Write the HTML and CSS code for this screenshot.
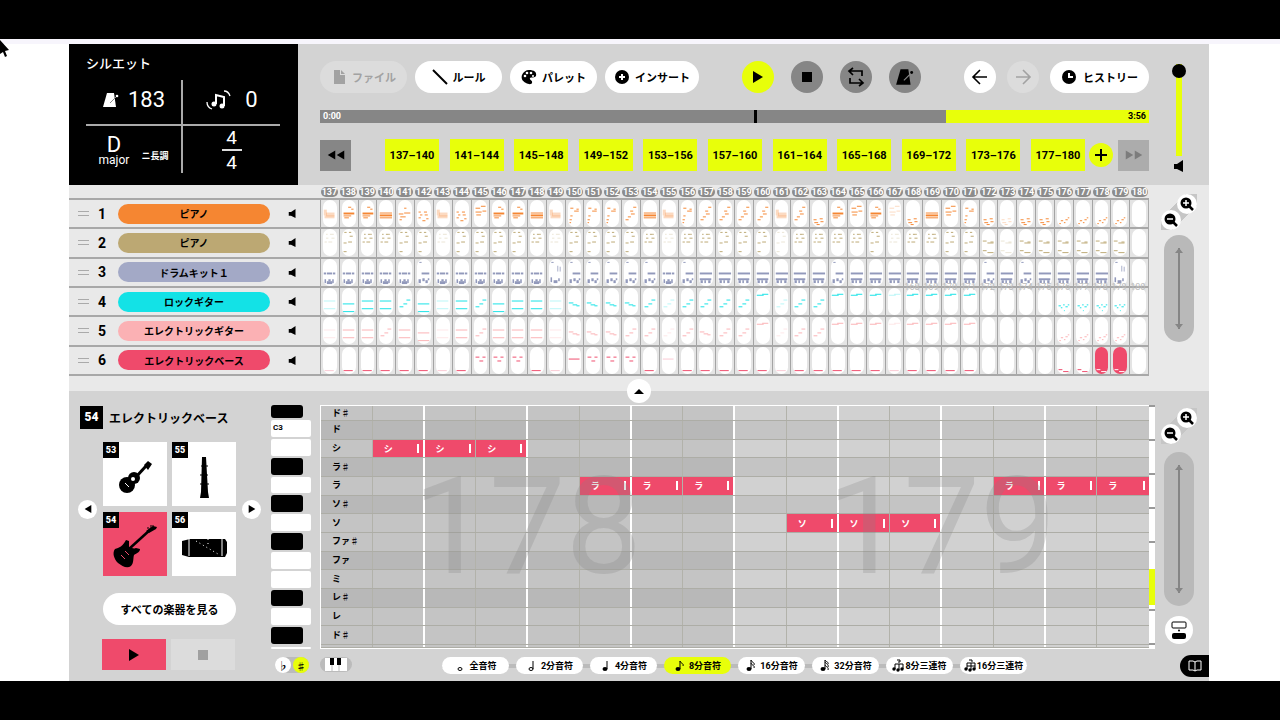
FILE: index.html
```
<!DOCTYPE html>
<html lang="ja">

<head>
    <meta charset="UTF-8">
    <meta name="viewport" content="width=device-width, initial-scale=1.0">
    <title>シルエット</title>
    <link rel="stylesheet" href="styles.css">
</head>

<body>
    <svg class="symbols" aria-hidden="true">
        <symbol id="i-play" viewBox="0 0 12 12"><path d="M1 0v12l10-6z"/></symbol>
        <symbol id="i-left" viewBox="0 0 12 12"><path d="M11 0v12L1 6z"/></symbol>
        <symbol id="i-stop" viewBox="0 0 12 12"><path d="M1 1h10v10H1z"/></symbol>
        <symbol id="i-speaker" viewBox="0 0 12 12"><path d="M1 4h3l6-4v12L4 9H1z"/></symbol>
        <symbol id="i-metronome" viewBox="0 0 18 18"><path d="M5 2h7l2 14H1z"/><path d="M8 12l7-7" class="stick"/><circle cx="15" cy="5" r="1.300"/></symbol>
        <symbol id="i-in" viewBox="0 0 14 14"><circle cx="6" cy="6" r="5.500"/><path d="M9 9l4 4" stroke="#000" stroke-width="2.500"/><path d="M3 6h6M6 3v6" stroke="#fff" stroke-width="1.500"/></symbol>
        <symbol id="i-out" viewBox="0 0 14 14"><circle cx="6" cy="6" r="5.500"/><path d="M9 9l4 4" stroke="#000" stroke-width="2.500"/><path d="M3 6h6" stroke="#fff" stroke-width="1.500"/></symbol>
        <symbol id="n-1" viewBox="0 0 12 14"><ellipse cx="6" cy="10" rx="2" ry="1.500" fill="none" stroke="#000"/></symbol>
        <symbol id="n-2" viewBox="0 0 12 14"><ellipse cx="5" cy="10" rx="2" ry="1.500" fill="none" stroke="#000"/><path d="M7 10V2" stroke="#000"/></symbol>
        <symbol id="n-4" viewBox="0 0 12 14"><ellipse cx="5" cy="10" rx="2.500" ry="2"/><path d="M7 10V2" stroke="#000"/></symbol>
        <symbol id="n-8" viewBox="0 0 12 14"><ellipse cx="4" cy="10" rx="2.500" ry="2"/><path d="M6 10V2c1 3 4 2 3 5" stroke="#000" fill="none"/></symbol>
        <symbol id="n-16" viewBox="0 0 12 14"><ellipse cx="4" cy="10" rx="2.500" ry="2"/><path d="M6 10V1c1 3 4 2 3 5M6 4c1 3 4 2 3 5" stroke="#000" fill="none"/></symbol>
        <symbol id="n-32" viewBox="0 0 12 14"><ellipse cx="4" cy="10" rx="2.500" ry="2"/><path d="M6 10V1c1 2 4 2 3 4M6 3c1 2 4 2 3 5M6 6c1 2 4 2 3 5" stroke="#000" fill="none"/></symbol>
        <symbol id="n-t8" viewBox="0 0 12 14"><circle cx="2" cy="10" r="1.700"/><circle cx="6" cy="11" r="1.700"/><circle cx="10" cy="10" r="1.700"/><path d="M3 10V5h8v5M7 11V5M5 1h3v2H6" stroke="#000" fill="none"/></symbol>
        <symbol id="n-t16" viewBox="0 0 12 14"><circle cx="2" cy="10" r="1.700"/><circle cx="6" cy="11" r="1.700"/><circle cx="10" cy="10" r="1.700"/><path d="M3 10V4h8v6M7 11V4M3 7h8M5 1h3v2" stroke="#000" fill="none"/></symbol>
    </svg>

    <main class="app">
        <header class="header">
            <section class="song">
                <h1>シルエット</h1>
                <div class="song-grid">
                    <div class="tempo"><svg class="icon-18"><use href="#i-metronome"/></svg><span>183</span></div>
                    <div class="transpose">
                        <svg class="icon-26" viewBox="0 0 26 20"><circle cx="9" cy="14" r="2.500"/><circle cx="17" cy="16" r="2.500"/><path d="M11 14V5l8 2v9" fill="none" stroke="#fff" stroke-width="2"/><path d="M2 12c0 4 2 6 5 7M19 1c4 0 5 2 6 5" fill="none" stroke="#fff" stroke-width="1.300"/></svg>
                        <span>0</span>
                    </div>
                    <div class="key"><p><span>D</span><small>major</small></p><em>ニ長調</em></div>
                    <div class="beat"><span>4</span><span>4</span></div>
                </div>
            </section>

            <section class="controls">
                <div class="toolbar">
                    <div class="group">
                        <button class="pill" disabled><svg class="icon-16" viewBox="0 0 16 16"><path d="M3 1h6v5h5v9H3zM10 1l4 4h-4z"/></svg>ファイル</button>
                        <button class="pill"><svg class="icon-16" viewBox="0 0 16 16"><path d="M1 1l14 14" stroke="#000" stroke-width="2"/></svg>ルール</button>
                        <button class="pill"><svg class="icon-16" viewBox="0 0 16 16"><path d="M8 1c5 0 8 2 7 6-1 2-5 1-6 2-1 2 3 2 2 5-1 2-4 1-6 0C1 12 0 9 1 6c1-3 4-5 7-5z"/><g fill="#fff"><circle cx="4" cy="7" r="1.300"/><circle cx="6" cy="4" r="1.300"/><circle cx="10" cy="4" r="1.300"/><circle cx="12" cy="7" r="1"/></g></svg>パレット</button>
                        <button class="pill"><svg class="icon-16" viewBox="0 0 16 16"><circle cx="8" cy="8" r="7"/><path d="M5 8h6M8 5v6" stroke="#fff" stroke-width="2"/></svg>インサート</button>
                    </div>
                    <div class="group transport">
                        <button class="round active" aria-label="再生"><svg class="icon-12"><use href="#i-play"/></svg></button>
                        <button class="round dark" aria-label="停止"><svg class="icon-12"><use href="#i-stop"/></svg></button>
                        <button class="round dark" aria-label="ループ"><svg class="icon-20" viewBox="0 0 20 20"><path d="M7 1L3 4l4 4M3 4h13v5M13 12l4 4-4 3M17 16H4v-5" fill="none" stroke="#000" stroke-width="1.700"/></svg></button>
                        <button class="round dark" aria-label="メトロノーム"><svg class="icon-20 lit"><use href="#i-metronome"/></svg></button>
                    </div>
                    <div class="group history">
                        <button class="round" aria-label="戻る"><svg class="icon-18" viewBox="0 0 18 18"><path d="M9 2L2 9l7 7M2 9h14" fill="none" stroke="#000" stroke-width="1.600"/></svg></button>
                        <button class="round" aria-label="進む" disabled><svg class="icon-18" viewBox="0 0 18 18"><path d="M9 2l7 7-7 7M16 9H2" fill="none" stroke="#a2a2a2" stroke-width="1.600"/></svg></button>
                        <button class="pill wide"><svg class="icon-16" viewBox="0 0 16 16"><circle cx="8" cy="8" r="7"/><path d="M8 4v4h4" fill="none" stroke="#fff" stroke-width="2"/></svg>ヒストリー</button>
                    </div>
                </div>

                <div class="progress">
                    <input type="range" min="0" max="1000" value="525" aria-label="再生位置">
                    <span>0:00</span><span class="total">3:56</span>
                </div>

                <div class="ranges">
                    <button class="skip" aria-label="前へ"><svg class="icon-9"><use href="#i-left"/></svg><svg class="icon-9"><use href="#i-left"/></svg></button>
                    <div class="range-list" id="ranges"></div>
                    <button class="add" aria-label="追加"><svg class="icon-12" viewBox="0 0 12 12"><path d="M0 6h12M6 0v12" stroke="#000" stroke-width="2"/></svg></button>
                    <button class="skip off" aria-label="次へ"><svg class="icon-9"><use href="#i-play"/></svg><svg class="icon-9"><use href="#i-play"/></svg></button>
                </div>
            </section>

            <div class="volume">
                <input type="range" min="0" max="100" value="100" aria-label="音量">
                <svg class="icon-12"><use href="#i-speaker"/></svg>
            </div>
        </header>

        <section class="tracks">
            <div class="timeline">
                <div class="measures" id="measures"></div>
                <div class="track-rows" id="tracks"></div>
            </div>
            <aside class="side">
                <div class="zoom">
                    <button class="zoom-in" aria-label="拡大"><svg class="icon-14"><use href="#i-in"/></svg></button>
                    <button class="zoom-out" aria-label="縮小"><svg class="icon-14"><use href="#i-out"/></svg></button>
                </div>
                <div class="scroller"><i></i></div>
            </aside>
            <button class="collapse" aria-label="閉じる"><svg class="icon-12" viewBox="0 0 12 12"><path d="M1 9l5-5 5 5z"/></svg></button>
        </section>

        <section class="editor">
            <aside class="instrument">
                <h2><b>54</b>エレクトリックベース</h2>
                <div class="carousel">
                    <button class="arrow" aria-label="前の楽器"><svg class="icon-8"><use href="#i-left"/></svg></button>
                    <div class="tiles">
                        <button class="tile"><b>53</b><svg viewBox="0 0 64 64"><circle cx="24" cy="43" r="8"/><circle cx="31" cy="36" r="6"/><path d="M33 35l10-11" stroke="#000" stroke-width="3"/><path d="M41 23l4-4 4 3-4 6z"/><circle cx="30" cy="37" r="2" fill="#fff"/><path d="M22 41l4 4" stroke="#fff"/></svg></button>
                        <button class="tile"><b>55</b><svg viewBox="0 0 64 64"><path d="M30 15h4l2 35 1 6h-9l1-6z"/><path d="M29 24h7M28 33h8M28 42h9" stroke="#000"/></svg></button>
                        <button class="tile selected"><b>54</b><svg viewBox="0 0 64 64"><path d="M12 37c4-1 8-3 11-9l3 1v6c3 1 5 2 7 1l4 1c0 3-3 4-6 6-1 3 0 8-3 11-4 3-9 0-13-3-4-4-6-10-3-14z"/><path d="M26 37l22-20" stroke="#000" stroke-width="2.500"/><path d="M43 19l7-5 4 1-1 2-7 4z"/><path d="M45 17v-2M48 16v-3M50 15v-2" stroke="#000"/><path d="M18 43l4 4M22 39l4 4" stroke="#ef4a6b"/></svg></button>
                        <button class="tile"><b>56</b><svg viewBox="0 0 64 64"><path d="M10 29l8-2h35l2 3v11l-2 4H17l-7-2z"/><path d="M17 27v17M50 27v17" stroke="#fff"/><path d="M24 29l22 13M36 27v5" stroke="#fff" stroke-dasharray="1 3"/></svg></button>
                    </div>
                    <button class="arrow" aria-label="次の楽器"><svg class="icon-8"><use href="#i-play"/></svg></button>
                </div>
                <button class="pill all">すべての楽器を見る</button>
                <div class="preview">
                    <button class="try" aria-label="試聴"><svg class="icon-12"><use href="#i-play"/></svg></button>
                    <button class="try off" aria-label="停止" disabled><svg class="icon-12"><use href="#i-stop"/></svg></button>
                </div>
            </aside>

            <div class="keyboard">
                <div class="keys" id="keys"></div>
                <div class="accidental"><button aria-label="フラット">♭</button><button class="active" aria-label="シャープ">♯</button></div>
            </div>

            <div class="roll-area">
                <div class="roll-wrap">
                    <div class="roll" id="roll"></div>
                    <div class="bar-numbers"><span>178</span><span>179</span></div>
                </div>
                <div class="lengths">
                    <button class="piano" aria-label="鍵盤"><svg viewBox="0 0 22 14"><path d="M0 0h22v13H0z" fill="#fff"/><path d="M7 0v13M14 0v13" stroke="#bbb"/><path d="M5 0h4v7H5zM12 0h4v7h-4z"/></svg></button>
                    <div class="length-list" id="lengths"></div>
                </div>
            </div>

            <div class="minimap"><i></i></div>

            <aside class="side">
                <div class="zoom">
                    <button class="zoom-in" aria-label="拡大"><svg class="icon-14"><use href="#i-in"/></svg></button>
                    <button class="zoom-out" aria-label="縮小"><svg class="icon-14"><use href="#i-out"/></svg></button>
                </div>
                <div class="scroller tall"><i></i></div>
                <button class="split" aria-label="表示切替"><svg viewBox="0 0 18 20"><rect x="2" y="2" width="14" height="6" rx="1" fill="#fff" stroke="#000"/><circle cx="9" cy="10.500" r="1"/><rect x="2" y="13" width="14" height="6" rx="2"/></svg></button>
                <button class="book" aria-label="ガイド"><svg class="icon-14" viewBox="0 0 14 14"><path d="M1 2h4l2 1 2-1h4v9H9l-2 1-2-1H1zM7 3v9" fill="none" stroke="#fff"/></svg></button>
            </aside>
        </section>
    </main>

    <svg class="pointer" viewBox="0 0 10 18" aria-hidden="true"><path d="M0 0l9 10-4 1 2 5-2 1-2-5-3 2z"/></svg>

    <script src="script.js"></script>
</body>

</html>
```

FILE: styles.css
```
* {
    box-sizing: border-box;
}
body {
    margin: 0;
    background: #000;
    color: #000;
    font-family: Roboto, "Noto Sans CJK JP", sans-serif;
    font-size: 11px;
    padding: 39px 0;
}
h1, h2, p {
    margin: 0;
}
button {
    display: flex;
    align-items: center;
    justify-content: center;
    flex: none;
    padding: 0;
    border: 0;
    background: #fff;
    color: #000;
    font: inherit;
    font-weight: bold;
    cursor: pointer;
}
svg {
    display: block;
    flex: none;
}
.symbols {
    position: absolute;
    width: 0;
    height: 0;
}
.icon-8 { width: 8px; height: 8px; }
.icon-9 { width: 9px; height: 12px; }
.icon-12 { width: 12px; height: 12px; }
.icon-14 { width: 14px; height: 14px; }
.icon-16 { width: 16px; height: 16px; }
.icon-18 { width: 18px; height: 18px; }
.icon-20 { width: 20px; height: 20px; }
.icon-26 { width: 26px; height: 20px; }
.stick {
    stroke: #888;
    stroke-width: 1;
}
.lit .stick {
    stroke: #ccc;
}
.app {
    padding: 0 71px 0 69px;
    border-top: 5px solid #f7f5fc;
    background: #fff;
}
.pointer {
    position: absolute;
    left: 0;
    top: 40px;
    width: 10px;
    height: 18px;
}

/* header */
.header {
    display: flex;
    height: 141px;
    background: #d3d3d3;
}
.song {
    width: 229px;
    padding: 10px 18px 12px 17px;
    background: #000;
    color: #fff;
    fill: #fff;
}
.song h1 {
    height: 26px;
    font-size: 13px;
    font-weight: 500;
    line-height: 20px;
}
.song-grid {
    display: grid;
    grid-template-columns: 1fr 1fr;
    grid-template-rows: 46px 47px;
}
.song-grid > div {
    display: flex;
    align-items: center;
    justify-content: center;
    font-size: 22px;
}
.tempo, .transpose {
    gap: 8px;
    padding-bottom: 5px;
    border-bottom: 2px solid #aaa;
}
.song-grid .transpose {
    gap: 14px;
}
.tempo, .key {
    border-right: 2px solid #aaa;
}
.key {
    gap: 12px;
}
.key p {
    display: flex;
    flex-direction: column;
    align-items: center;
    line-height: 20px;
}
.key small {
    font-size: 12px;
    line-height: 10px;
}
.key em {
    padding-top: 12px;
    font-size: 9px;
    font-style: normal;
    font-weight: bold;
}
.beat {
    flex-direction: column;
}
.beat span {
    width: 20px;
    font-size: 19px;
    line-height: 23px;
    text-align: center;
}
.beat span + span {
    border-top: 2px solid #ddd;
}
.controls {
    display: flex;
    flex-direction: column;
    flex: 1;
    padding: 17px 0 14px 22px;
    justify-content: space-between;
}
.toolbar, .group, .ranges, .range-list {
    display: flex;
    align-items: center;
}
.toolbar {
    justify-content: space-between;
}
.group {
    gap: 8px;
}
.transport {
    gap: 17px;
}
.history {
    gap: 11px;
}
.pill {
    gap: 5px;
    height: 32px;
    padding: 0 9px;
    border-radius: 16px;
    min-width: 87px;
}
.pill.wide {
    min-width: 99px;
    gap: 6px;
}
.pill:disabled, .round:disabled {
    background: #dcdcdc;
    color: #a2a2a2;
    fill: #a2a2a2;
}
.round {
    width: 32px;
    height: 32px;
    border-radius: 50%;
}
.round.dark {
    background: #868686;
}
.active, .round.active {
    background: #e8ff0a;
}
.progress {
    position: relative;
    display: flex;
    justify-content: space-between;
    height: 13px;
    font-size: 9px;
    font-weight: bold;
    line-height: 13px;
    padding: 0 3px;
    background: linear-gradient(to right, #868686 626px, #e8ff0a 626px);
    color: #fff;
}
.progress span {
    position: relative;
    pointer-events: none;
}
.progress .total {
    color: #000;
}
.progress input {
    position: absolute;
    inset: 0;
    width: 100%;
    height: 13px;
    margin: 0;
    appearance: none;
    background: none;
}
.progress input::-webkit-slider-thumb {
    appearance: none;
    width: 3px;
    height: 13px;
    background: #000;
}
.range-list {
    flex: 1;
    justify-content: space-between;
    padding: 0 4px 0 34px;
}
.range-list button {
    width: 54px;
    height: 32px;
    background: #e8ff0a;
    font-size: 11px;
}
.skip {
    width: 31px;
    height: 31px;
    background: #868686;
}
.skip.off {
    background: #acacac;
    fill: #7c7c7c;
}
.add {
    width: 24px;
    height: 24px;
    margin-right: 5px;
    border-radius: 50%;
    background: #e8ff0a;
}
.volume {
    display: flex;
    flex-direction: column;
    align-items: center;
    gap: 4px;
    width: 60px;
    padding-top: 20px;
}
.volume input {
    width: 14px;
    height: 92px;
    margin: 0;
    appearance: none;
    writing-mode: vertical-lr;
    direction: rtl;
    background: linear-gradient(#e8ff0a, #e8ff0a) center / 6px 100% no-repeat;
}
.volume input::-webkit-slider-thumb {
    appearance: none;
    width: 14px;
    height: 14px;
    border-radius: 50%;
    background: #000;
}

/* tracks */
.tracks {
    position: relative;
    display: flex;
    height: 206px;
    background: #e9e9e9;
}
.timeline {
    flex: 1;
    min-width: 0;
}
.measures {
    display: grid;
    grid-template-columns: repeat(44, minmax(0, 1fr));
    height: 13px;
    margin-left: 251px;
    padding-top: 2px;
}
.measures span {
    display: flex;
    justify-content: center;
    height: 10px;
    margin: 0 1px;
    border-radius: 5px;
    background: #8c8c8c;
    color: #fff;
    font-size: 9px;
    font-weight: bold;
    line-height: 10px;
}
.track-rows {
    display: grid;
    grid-template-rows: repeat(6, 1fr);
    height: 178px;
    border-bottom: 2px solid #a8a8a8;
}
.track {
    display: flex;
    border-top: 2px solid #a8a8a8;
}
.track-head {
    display: flex;
    flex: none;
    align-items: center;
    width: 251px;
    padding-left: 9px;
}
.handle {
    width: 11px;
    height: 5px;
    border: solid #aaa;
    border-width: 1px 0;
}
.track-head b {
    width: 26px;
    font-size: 14px;
    text-align: center;
}
.track-name {
    width: 152px;
    height: 20px;
    margin: 0 16px 0 3px;
    border-radius: 10px;
    font-size: 10px;
}
.mute {
    width: 12px;
    height: 12px;
    background: none;
}
.mute svg {
    width: 9px;
    height: 9px;
}
.cells {
    display: grid;
    flex: 1;
    grid-template-columns: repeat(44, minmax(0, 1fr));
    border-right: 1px solid #aaa;
}
.cell {
    position: relative;
    padding: 0 2px;
    border-left: 1px solid #a4a4a4;
    background: #e4e4e4;
}
.cell svg {
    width: 100%;
    height: 27px;
    border-radius: 7px;
    background: #fff;
}
.cell.faint rect {
    opacity: .3;
}
.cell.picked svg {
    background: #ef4a6b;
}
.cell small {
    position: absolute;
    left: 0;
    top: -6px;
    color: #bbb;
    font-size: 9px;
    line-height: 10px;
}
.collapse {
    position: absolute;
    left: 50%;
    bottom: -12px;
    z-index: 2;
    width: 24px;
    height: 24px;
    margin-left: -12px;
    border-radius: 50%;
}
.side {
    display: flex;
    flex: none;
    flex-direction: column;
    align-items: center;
    width: 60px;
    padding-top: 9px;
}
.zoom {
    display: grid;
    grid-template-columns: 16px 20px;
    grid-template-rows: 16px 20px;
    height: 36px;
    flex: none;
    background: linear-gradient(135deg, transparent 34%, #c6c6c6 34% 66%, transparent 66%);
}
.zoom button {
    width: 20px;
    height: 20px;
    border-radius: 50%;
}
.zoom .zoom-in {
    grid-column: 2;
}
.zoom .zoom-out {
    grid-row: 2;
}
.scroller {
    display: flex;
    justify-content: center;
    width: 30px;
    height: 107px;
    margin-top: 5px;
    padding: 13px 0;
    border-radius: 15px;
    background: #b9b9b9;
}
.scroller i {
    display: flex;
    flex-direction: column;
    justify-content: space-between;
    align-items: center;
    width: 8px;
    background: linear-gradient(#858585, #858585) center / 2px 100% no-repeat;
}
.scroller i::before, .scroller i::after {
    content: "";
    border: 4px solid transparent;
    border-top: 0;
    border-bottom: 5px solid #858585;
}
.scroller i::after {
    border-top: 5px solid #858585;
    border-bottom: 0;
}

/* editor */
.editor {
    display: flex;
    height: 290px;
    padding-top: 14px;
    background: #d3d3d3;
}
.instrument {
    display: flex;
    flex: none;
    flex-direction: column;
    width: 202px;
    padding: 1px 10px 0 9px;
}
.instrument h2 {
    display: flex;
    align-items: center;
    gap: 6px;
    padding-left: 2px;
    font-size: 12px;
}
.instrument h2 b {
    width: 23px;
    font-size: 12px;
    line-height: 23px;
    background: #000;
    color: #fff;
    text-align: center;
}
.carousel {
    display: flex;
    align-items: center;
    gap: 6px;
    margin-top: 13px;
}
.arrow {
    width: 19px;
    height: 19px;
    border-radius: 50%;
}
.tiles {
    display: grid;
    grid-template-columns: 64px 64px;
    gap: 6px 5px;
}
.tile {
    position: relative;
    height: 64px;
}
.tile svg {
    width: 64px;
    height: 64px;
}
.tile.selected {
    background: #ef4a6b;
}
.tile b {
    position: absolute;
    left: 0;
    top: 0;
    width: 16px;
    background: #000;
    color: #fff;
    font-size: 9px;
    line-height: 16px;
}
.pill.all {
    margin: 17px 25px 14px;
    padding: 0;
}
.preview {
    display: flex;
    gap: 5px;
    margin: 0 24px;
}
.try {
    width: 64px;
    height: 31px;
    background: #ef4a6b;
}
.try.off {
    background: #dcdcdc;
    fill: #a0a0a0;
}
.keyboard {
    flex: none;
    width: 49px;
}
.keys, .roll {
    display: grid;
    grid-template-rows: 15px repeat(12, 1fr) 3px;
    height: 244px;
    overflow: hidden;
}
.keys span {
    width: 40px;
    margin-bottom: 2px;
    padding-left: 2px;
    border-radius: 2px;
    background: #fff;
    font-size: 8px;
    font-weight: bold;
    line-height: 16px;
}
.keys .black {
    width: 32px;
    border-radius: 3px;
    background: #000;
}
.keys span:last-child {
    margin: 1px 0 0;
}
.accidental {
    display: flex;
    justify-content: space-between;
    width: 34px;
    margin: 8px 0 0 4px;
    border-radius: 8px;
    background: #bbb;
}
.accidental button {
    width: 16px;
    height: 16px;
    border-radius: 50%;
    font-size: 10px;
}
.accidental .active {
    background: #e8ff0a;
}
.roll-area {
    flex: 1;
    min-width: 0;
}
.roll-wrap {
    position: relative;
}
.roll {
    border: solid #fff;
    border-width: 1px 0 1px 1px;
}
.roll-row {
    display: grid;
    grid-template-columns: repeat(16, minmax(0, 1fr));
    border-bottom: 1px solid #adada6;
    background: #d1d1d1;
}
.roll-row.dark {
    background: #c4c4c4;
}
.roll-row > div {
    display: flex;
    min-height: 0;
    border-right: 1px solid #b2b2aa;
}
.roll-row > div:nth-child(even) {
    border-right: 2px solid #fff;
}
.roll-row > div:last-child {
    border-right: 0;
}
.roll-row > div:nth-child(-n+8) {
    background: rgba(0, 0, 0, .06);
}
.roll-row .pitch {
    align-items: center;
    padding-left: 11px;
    font-size: 9px;
    font-weight: bold;
    line-height: 17px;
}
.note {
    flex: 1;
    justify-content: space-between;
    padding: 0 4px 0 11px;
    background: #ef4a6b;
    color: #fff;
    font-size: 9px;
}
.note::after {
    content: "";
    width: 2px;
    height: 9px;
    background: #fff;
}
.bar-numbers {
    position: absolute;
    inset: 0;
    display: grid;
    grid-template-columns: 1fr 1fr;
    align-items: center;
    color: rgba(130, 130, 130, .26);
    font-size: 136px;
    line-height: 240px;
    text-align: center;
    pointer-events: none;
}
.lengths {
    position: relative;
    display: flex;
    justify-content: center;
    padding-top: 8px;
}
.piano {
    position: absolute;
    left: 0;
    top: 8px;
    width: 32px;
    height: 15px;
    border-radius: 8px;
    background: #bbb;
}
.piano svg {
    width: 22px;
    height: 14px;
}
.length-list {
    display: flex;
    gap: 7px;
    background: linear-gradient(#bbb, #bbb) center / 100% 4px no-repeat;
}
.length-list button {
    gap: 3px;
    width: 67px;
    height: 17px;
    border-radius: 9px;
    font-size: 9px;
}
.length-list svg {
    width: 12px;
    height: 14px;
}
.length-list .triplet {
    gap: 1px;
}
.length-list .active {
    background: #e8ff0a;
}
.minimap {
    flex: none;
    width: 6px;
    height: 244px;
    margin-right: -6px;
    padding-top: 164px;
    background: repeating-linear-gradient(#999 0 2px, #fff 2px 34px);
}
.minimap i {
    display: block;
    height: 36px;
    background: #e8ff0a;
}
.editor .side {
    padding-top: 3px;
}
.scroller.tall {
    height: 154px;
    margin-top: 8px;
}
.split {
    width: 28px;
    height: 28px;
    margin: 10px 0 11px;
    border-radius: 50%;
}
.split svg {
    width: 18px;
    height: 20px;
}
.book {
    align-self: flex-end;
    width: 29px;
    height: 22px;
    border-radius: 11px 0 0 11px;
    background: #000;
}
```

FILE: script.js
```
const FIRST = 137;
const COUNT = 44;

// notes of one measure: "x,y,width[,height]" on an 18 x 28 grid
const patterns = {
    a: '2,13,14,2 2,16,10 3,18,6 8,7,4 12,9,3',
    b: '1,13,16 1,15,16,2 1,18,16',
    c: '1,14,6 8,13,8 8,8,3 3,17,7 2,20,3',
    d: '2,12,3 9,12,4 4,15,3 10,15,4 2,18,3 7,21,4 12,19,3',
    e: '3,8,4 8,11,6 3,16,3 11,9,3 2,20,3 2,23,2',
    f: '1,10,4,6 4,13,11,4 2,16,13,3',
    g: '2,20,4 5,17,4 9,14,5 8,11,4 12,7,4',
    h: '2,20,4 3,23,5 10,19,4 11,22,4 6,25,4',
    i: '2,8,6 9,6,6 2,12,8 11,11,5 3,15,6',
    j: '3,24,2 5,21,3 9,23,2 11,20,3 14,18,2',
    k: '4,5,2 9,5,3 12,5,2 4,9,3 11,9,4 2,13,3 7,13,5',
    l: '3,3,3 9,3,3 10,7,4 2,14,4 8,13,5 2,23,4',
    m: '1,12,5 7,14,8 1,22,5 7,24,8 11,13,4',
    n: '1,14,3,2 5,14,7,2 13,14,3,2 2,21,2,4 5,23,7,3 12,21,2,4 7,21,3,2',
    o: '1,14,16,2 1,20,15,2 2,22,3,3 7,22,2,3 12,22,3,3',
    p: '3,3,3 6,14,10,2 2,21,3,4 7,20,3,3 11,22,3,3 14,20,2,2',
    q: '3,3,3 11,7,1,6 14,8,1,5 2,19,2,5 6,22,5,3 12,20,2,3',
    r: '1,16,15,1 1,24,15,1',
    s: '1,13,15 1,21,15',
    t: '1,15,6 6,17,6 11,18,4',
    u: '2,19,5 7,16,5 11,12,5',
    v: '1,7,9 8,6,8',
    w: '2,18,3 5,20,2 8,17,2 11,19,3 14,17,2 9,23,1',
    x: '2,24,12',
    y: '2,10,5 11,10,4 7,14,5',
    z: '2,23,5 8,25,7',
    1: '1,12,14'
};

const tracks = [
    { name: 'ピアノ', color: '#f58632', pattern: 'faabcdfdiaabfeeegbfeggggfghaiaihbiehhhhjjjj.' },
    { name: 'ピアノ', color: '#bca873', pattern: 'klkkllkllllkkllllkkkkllllkkkklkkkllmmmmmmmm.' },
    { name: 'ドラムキット１', color: '#a3a9c6', note: '#9299bb', pattern: 'nnnnnpnnnnnnqpppppnpooooooopooooooopopooooqp.' },
    { name: 'ロックギター', color: '#13e2e6', pattern: 'srssurssursssttttuuuuuuvuuuvvvvvvvv....wwww.' },
    { name: 'エレクトリックギター', color: '#fbb1b4', pattern: 'sssusrssusssstttuuuutuuvuuuvvvvvvvv....jjjj.' },
    { name: 'エレクトリックベース', color: '#ef4a6b', pattern: 'xxxxxxxxyyyxx1yyyx1xxxxxxxxxxxxxxxx....zzzz.' }
];

const measures = document.getElementById('measures');
for (let i = 0; i < COUNT; i++) {
    measures.innerHTML += `<span>${FIRST + i}</span>`;
}

const drawCell = (track, row, i) => {
    const picked = row === 5 && (i === 41 || i === 42);
    const faint = row !== 2 && i % 6 === 0 && i < 38;
    const empty = i === COUNT - 1;
    const notes = empty ? '' : (patterns[track.pattern[i]] || '').split(' ').filter(n => n).map(n => {
        const [x, y, w, h = 1] = n.split(',');
        return `<rect x="${x}" y="${y}" width="${w}" height="${h}" fill="${picked ? '#fff' : track.note || track.color}"/>`;
    }).join('');
    const label = row === 3 && i > 30 ? `<small>${FIRST + i}</small>` : '';
    return `<div class="cell ${faint ? 'faint' : ''} ${picked ? 'picked' : ''}"><svg viewBox="0 0 18 28" preserveAspectRatio="none">${notes}</svg>${label}</div>`;
};

document.getElementById('tracks').innerHTML = tracks.map((track, row) => {
    let cells = '';
    for (let i = 0; i < COUNT; i++) {
        cells += drawCell(track, row, i);
    }
    return `<div class="track">
        <div class="track-head">
            <span class="handle"></span><b>${row + 1}</b>
            <button class="track-name" style="background:${track.color}">${track.name}</button>
            <button class="mute" aria-label="ミュート"><svg><use href="#i-speaker"/></svg></button>
        </div>
        <div class="cells">${cells}</div>
    </div>`;
}).join('');

let ranges = '';
for (let m = FIRST; m < FIRST + COUNT; m += 4) {
    ranges += `<button>${m}–${m + 3}</button>`;
}
document.getElementById('ranges').innerHTML = ranges;

const pitches = ['ド♯', 'ド', 'シ', 'ラ♯', 'ラ', 'ソ♯', 'ソ', 'ファ♯', 'ファ', 'ミ', 'レ♯', 'レ', 'ド♯', ''];
const darkRows = [1, 3, 5, 8, 10];
const notes = { 2: [1, 2, 3], 4: [5, 6, 7, 13, 14, 15], 6: [9, 10, 11] };

document.getElementById('keys').innerHTML = pitches.map((p, i) =>
    `<span class="${p.includes('♯') ? 'black' : ''}">${i === 1 ? 'C3' : ''}</span>`).join('');

document.getElementById('roll').innerHTML = pitches.map((p, row) => {
    let cells = `<div class="pitch">${p}</div>`;
    for (let i = 1; i < 16; i++) {
        const on = (notes[row] || []).includes(i);
        cells += `<div>${on ? `<button class="note">${p}</button>` : ''}</div>`;
    }
    return `<div class="roll-row ${darkRows.includes(row) ? 'dark' : ''}">${cells}</div>`;
}).join('');

const lengths = [['1', '全音符'], ['2', '2分音符'], ['4', '4分音符'], ['8', '8分音符'], ['16', '16分音符'], ['32', '32分音符'], ['t8', '8分三連符'], ['t16', '16分三連符']];
document.getElementById('lengths').innerHTML = lengths.map(([icon, text]) =>
    `<button class="${icon === '8' ? 'active' : ''} ${icon[0] === 't' ? 'triplet' : ''}"><svg><use href="#n-${icon}"/></svg>${text}</button>`).join('');
```
